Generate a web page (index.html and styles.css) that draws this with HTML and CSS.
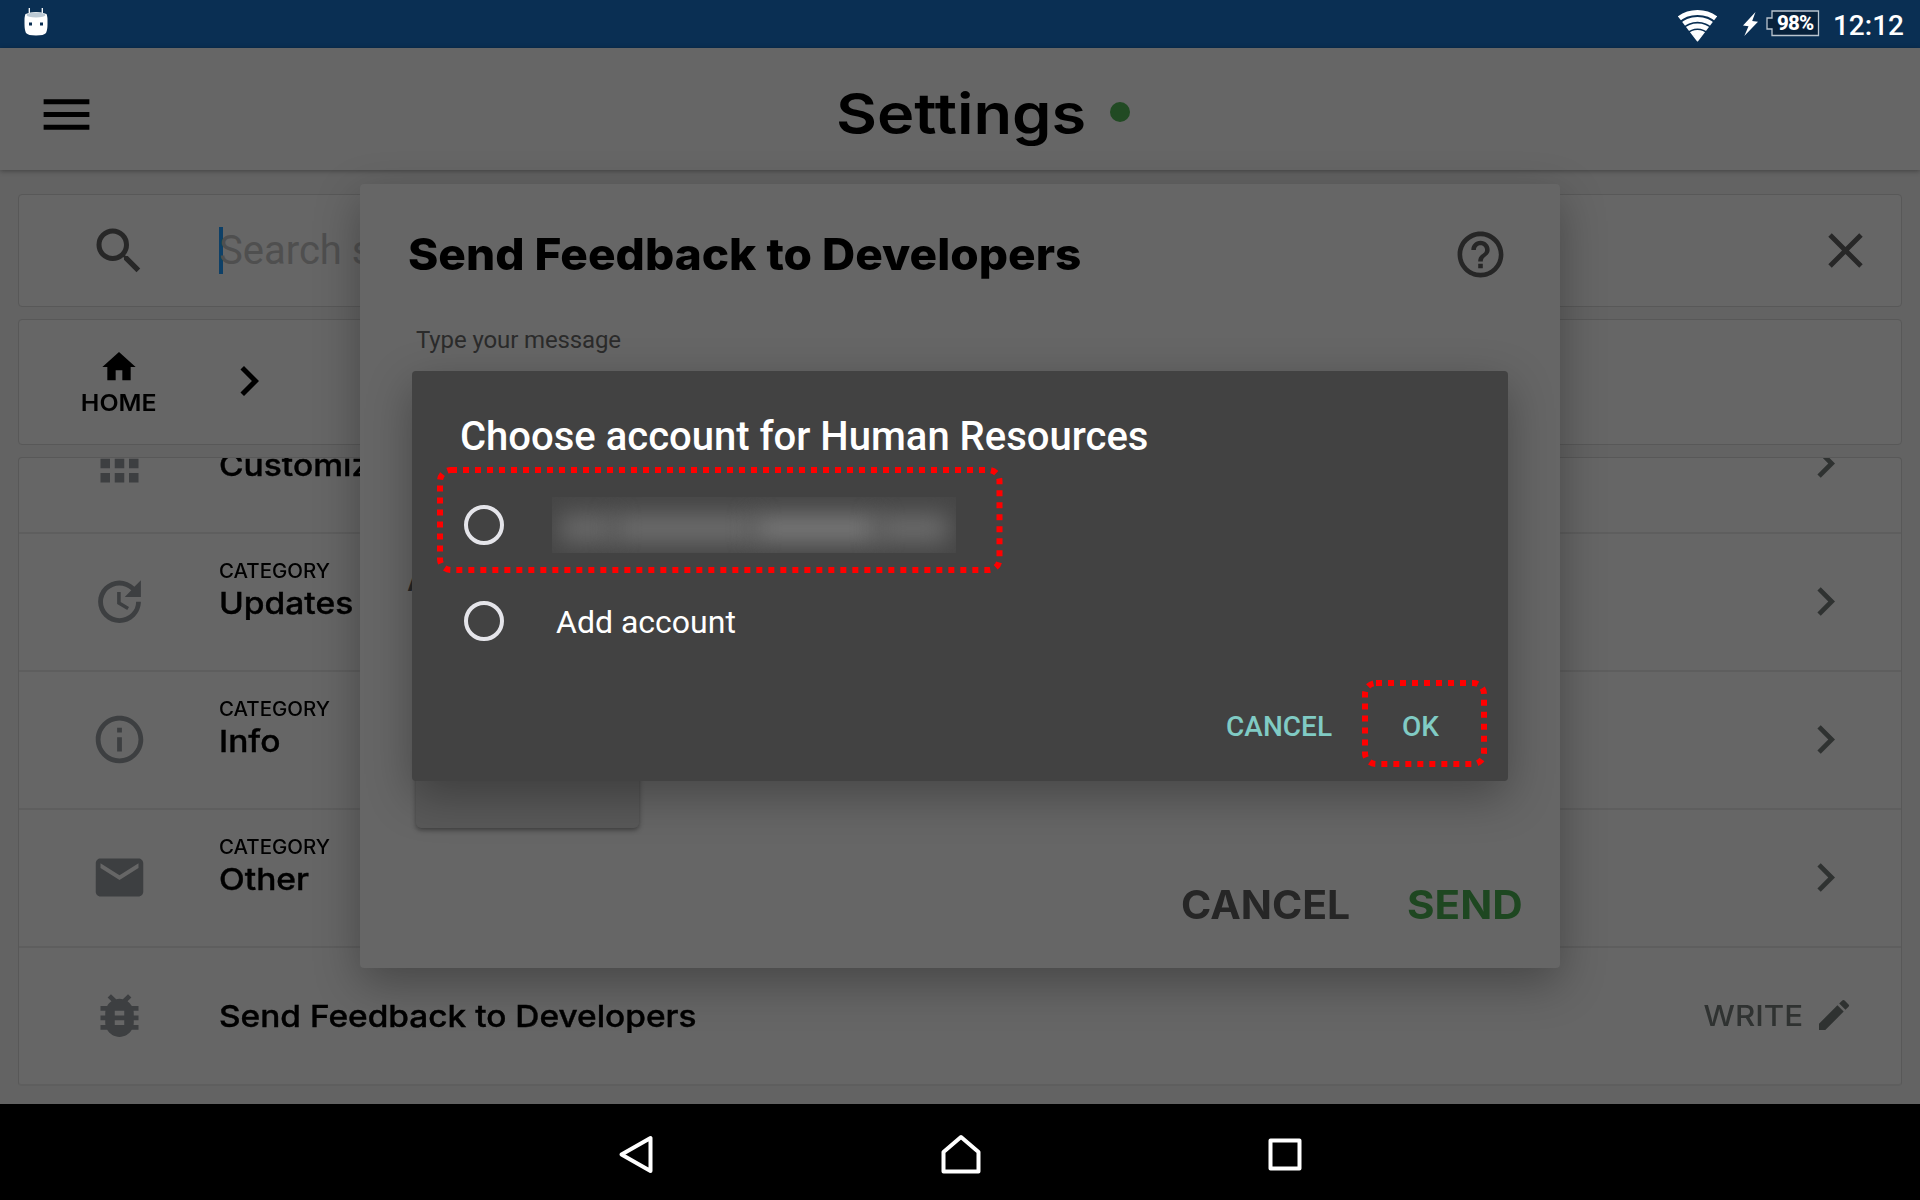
FILE: index.html
```html
<!DOCTYPE html>
<html lang="en">
<head>
<meta charset="utf-8">
<title>Settings</title>
<link rel="stylesheet" href="styles.css">
</head>
<body>
<svg class="defs" width="0" height="0">
  <symbol id="chevron" viewBox="0 0 24 24"><path d="M8.59 16.59 13.17 12 8.59 7.41 10 6l6 6-6 6z"/></symbol>
</svg>
<div class="screen">
  <header class="status">
    <svg class="droid" viewBox="0 0 24 28"><path d="M5.300 0v6M18.300 0v6" stroke="#fff" stroke-width="1.300"/><path fill="#fff" d="M1.500 6Q12 2 22.500 6 23.700 8 23.500 16q0 6-1.500 9-2 2.500-10 2.500T2 25Q.5 22 .5 16 .3 8 1.500 6z"/><ellipse cx="12" cy="7" rx="9.500" ry="2.600" fill="#bccad5"/><path fill="#0a2f53" d="M5 14.500h3v3H5zM16 14.500h3v3h-3z"/></svg>
    <svg class="wifi" viewBox="0 0 39 32" fill="none"><defs><clipPath id="fan"><path d="M19.500 32 0 6.500V0h39v6.500z"/></clipPath></defs><g clip-path="url(#fan)" stroke="#fff" stroke-width="4.800"><circle cx="19.500" cy="34" r="31.500"/><circle cx="19.500" cy="34" r="24.600"/><circle cx="19.500" cy="34" r="18"/><circle cx="19.500" cy="34" r="11.500"/><circle cx="19.500" cy="32" r="3.500" stroke-width="8"/></g></svg>
    <svg class="bolt" viewBox="0 0 15 24"><path fill="#fff" d="M12.500 0 0 13.500l5.500.8L1.300 24 15 9.800l-5.800-.8z"/></svg>
    <div class="battery"><svg viewBox="0 0 54 27"><path d="M6 1h46.500v24.500H6V19H1V8h5z" fill="#07213b" stroke="#b9c4ce" stroke-width="1.300"/></svg><span>98%</span></div>
    <time class="clock">12:12</time>
  </header>

  <div class="appbar">
    <svg class="menu" viewBox="0 0 24 24"><path d="M3 18h18v-2H3v2zm0-5h18v-2H3v2zm0-7v2h18V6H3z"/></svg>
    <h1><span class="fit">Settings</span></h1>
    <i class="dot"></i>
  </div>

  <main class="content">
    <section class="card search">
      <svg class="ic60" viewBox="0 0 24 24"><path d="M15.500 14h-.79l-.28-.27A6.471 6.471 0 0 0 16 9.500 6.500 6.500 0 1 0 9.500 16c1.610 0 3.090-.59 4.230-1.570l.27.28v.79l5 4.990L20.490 19l-4.990-5zm-6 0C7.010 14 5 11.990 5 9.500S7.010 5 9.500 5 14 7.010 14 9.500 11.990 14 9.500 14z"/></svg>
      <div class="field">Search settings</div>
      <svg class="ic59" viewBox="0 0 24 24"><path d="M19 6.410 17.590 5 12 10.590 6.410 5 5 6.410 10.590 12 5 17.590 6.410 19 12 13.410 17.590 19 19 17.590 13.410 12z"/></svg>
    </section>

    <nav class="card crumbs">
      <div class="home">
        <svg class="ic40" viewBox="0 0 24 24"><path d="M10 20v-6h4v6h5v-8h3L12 3 2 12h3v8z"/></svg>
        <span class="fit">HOME</span>
      </div>
      <svg class="ic60"><use href="#chevron"/></svg>
    </nav>

    <section class="card list">
      <div class="row">
        <svg class="ic57" viewBox="0 0 24 24"><path d="M4 8h4V4H4v4zm6 12h4v-4h-4v4zm-6 0h4v-4H4v4zm0-6h4v-4H4v4zm6 0h4v-4h-4v4zm6-10v4h4V4h-4zm-6 4h4V4h-4v4zm6 6h4v-4h-4v4zm0 6h4v-4h-4v4z"/></svg>
        <div class="label"><b><span class="fit">Customize</span></b></div>
        <svg class="ic57 go"><use href="#chevron"/></svg>
      </div>
      <div class="row">
        <svg class="ic57" viewBox="0 0 24 24"><path d="M21 10.120h-6.780l2.740-2.820c-2.730-2.700-7.150-2.800-9.880-.1a6.875 6.875 0 0 0 0 9.790 7.020 7.020 0 0 0 9.880 0C18.320 15.650 19 14.080 19 12.100h2c0 1.980-.88 4.550-2.640 6.290-3.510 3.480-9.210 3.480-12.720 0-3.500-3.470-3.530-9.110-.02-12.580a8.987 8.987 0 0 1 12.650 0L21 3v7.120zM12.500 8v4.250l3.500 2.080-.72 1.210L11 13V8h1.500z"/></svg>
        <div class="label"><small><span class="fit">CATEGORY</span></small><b><span class="fit">Updates</span></b></div>
        <svg class="ic57 go"><use href="#chevron"/></svg>
      </div>
      <div class="row">
        <svg class="ic57" viewBox="0 0 24 24"><path d="M11 17h2v-6h-2v6zm1-15C6.480 2 2 6.480 2 12s4.480 10 10 10 10-4.480 10-10S17.520 2 12 2zm0 18c-4.410 0-8-3.590-8-8s3.590-8 8-8 8 3.590 8 8-3.590 8-8 8zM11 9h2V7h-2v2z"/></svg>
        <div class="label"><small><span class="fit">CATEGORY</span></small><b><span class="fit">Info</span></b></div>
        <svg class="ic57 go"><use href="#chevron"/></svg>
      </div>
      <div class="row">
        <svg class="ic57" viewBox="0 0 24 24"><path d="M20 4H4c-1.100 0-1.990.9-1.990 2L2 18c0 1.100.9 2 2 2h16c1.100 0 2-.9 2-2V6c0-1.100-.9-2-2-2zm0 4-8 5-8-5V6l8 5 8-5v2z"/></svg>
        <div class="label"><small><span class="fit">CATEGORY</span></small><b><span class="fit">Other</span></b></div>
        <svg class="ic57 go"><use href="#chevron"/></svg>
      </div>
      <div class="row">
        <svg class="ic57" viewBox="0 0 24 24"><path d="M20 8h-2.810a5.985 5.985 0 0 0-1.820-1.960L17 4.410 15.590 3l-2.170 2.170a6.002 6.002 0 0 0-2.830 0L8.410 3 7 4.410l1.620 1.630C7.880 6.550 7.260 7.220 6.810 8H4v2h2.090c-.05.33-.09.66-.09 1v1H4v2h2v1c0 .34.040.67.090 1H4v2h2.810c1.040 1.790 2.970 3 5.190 3s4.150-1.210 5.190-3H20v-2h-2.090c.05-.33.090-.66.090-1v-1h2v-2h-2v-1c0-.34-.040-.67-.090-1H20V8zm-6 8h-4v-2h4v2zm0-4h-4v-2h4v2z"/></svg>
        <div class="label single"><b><span class="fit">Send Feedback to Developers</span></b></div>
        <div class="write"><span class="fit">WRITE</span><svg class="ic40" viewBox="0 0 24 24"><path d="M3 17.250V21h3.750L17.810 9.940l-3.750-3.750L3 17.250zM20.710 7.040a.996.996 0 0 0 0-1.410l-2.340-2.340a.996.996 0 0 0-1.410 0l-1.830 1.830 3.750 3.750 1.830-1.830z"/></svg></div>
      </div>
    </section>
  </main>

  <footer class="navbar">
    <svg viewBox="0 0 40 40"><path d="M4.500 20.500 33.500 4v33z"/></svg>
    <svg viewBox="0 0 40 40"><path d="M2.500 37.500V18L20 3l17.500 15v19.500z"/></svg>
    <svg viewBox="0 0 40 40"><path d="M5.500 6.500h29v28h-29z"/></svg>
  </footer>

  <section class="feedback">
    <div class="feedback-head">
      <h2><span class="fit">Send Feedback to Developers</span></h2>
      <svg class="ic55" viewBox="0 0 24 24"><path d="M11 18h2v-2h-2v2zm1-16C6.480 2 2 6.480 2 12s4.480 10 10 10 10-4.480 10-10S17.520 2 12 2zm0 18c-4.410 0-8-3.590-8-8s3.590-8 8-8 8 3.590 8 8-3.590 8-8 8zm0-14c-2.210 0-4 1.790-4 4h2c0-1.100.9-2 2-2s2 .9 2 2c0 2-3 1.750-3 5h2c0-2.250 3-2.500 3-5 0-2.210-1.790-4-4-4z"/></svg>
    </div>
    <div class="hint">Type your message</div>
    <div class="attach">A</div>
    <div class="attach-btn"></div>
    <div class="feedback-actions"><span class="cancel"><span class="fit">CANCEL</span></span><span class="send"><span class="fit">SEND</span></span></div>
  </section>

  <section class="chooser">
    <h3>Choose account for Human Resources</h3>
    <div class="option"><i class="radio"></i><div class="redacted"><i></i><i></i><i></i><i></i></div></div>
    <div class="option"><i class="radio"></i><span>Add account</span></div>
    <div class="chooser-actions"><span>CANCEL</span><span>OK</span></div>
    <svg class="mark mark-account" width="568" height="108"><rect x="4" y="4" width="559.500" height="100" rx="11"/></svg>
    <svg class="mark mark-ok" width="127" height="89"><rect x="4" y="4" width="119" height="81" rx="11"/></svg>
  </section>
</div>
</body>
</html>
```
FILE: styles.css
```css
* { box-sizing: border-box; margin: 0; padding: 0; }
body { width: 1920px; height: 1200px; overflow: hidden; background: #000; font-family: Roboto, sans-serif; }
.defs { position: absolute; }
svg { display: block; flex: none; }
.screen { position: relative; width: 1920px; height: 1200px; overflow: hidden; display: grid; grid-template-rows: 48px 122px 934px 96px; }
.fit { display: inline-block; white-space: nowrap; font-family: Inter, sans-serif; transform: scaleX(1.1); transform-origin: 0 50%; }

.status { background: #0a2f53; color: #fff; display: flex; align-items: flex-start; padding: 0 16px 0 24px; }
.droid { width: 24px; height: 28px; margin-top: 8px; }
.wifi { width: 39px; height: 32px; margin: 10px 26px 0 auto; }
.bolt { width: 15px; height: 24px; margin: 12px 8px 0 0; }
.battery { position: relative; width: 54px; height: 27px; margin-top: 10px; padding-left: 11px; font-size: 20.500px; font-weight: 800; line-height: 27px; letter-spacing: -0.8px; }
.battery svg { position: absolute; inset: 0; }
.battery span { position: relative; }
.clock { margin-left: 13px; font-size: 28px; font-weight: 500; line-height: 51px; }

.appbar { position: relative; z-index: 1; background: #666; display: grid; grid-template-columns: 801px 281px 20px; align-items: center; padding: 10px 0 0 35.500px; box-shadow: 0 1px 5px rgba(0,0,0,.35); }
.menu { width: 61px; height: 61px; }
h1 { font-size: 56px; font-weight: 600; line-height: 70px; margin-left: -1px; }
h1 .fit { transform: scaleX(1.127); }
.dot { width: 20px; height: 20px; margin: 0 0 5px -8px; border-radius: 50%; background: #214a23; }

.content { background: #636363; padding: 24px 18px 18px; display: grid; grid-template-rows: 113px 126px 629px; row-gap: 12px; }
.card { border: 1px solid #585858; border-radius: 4px; background: #666; }
.ic40 { width: 40px; height: 40px; }
.ic55 { width: 55px; height: 55px; }
.ic57 { width: 57px; height: 57px; }
.ic59 { width: 59px; height: 59px; }
.ic60 { width: 60px; height: 60px; }
.search, .crumbs { display: grid; grid-template-columns: 200px 1fr auto; align-items: center; }
.search { fill: #272727; padding-right: 26.500px; }
.search .ic60 { justify-self: center; }
.field { border-left: 4px solid #0e4067; height: 47px; font-size: 40px; line-height: 48px; color: #4f4f4f; text-indent: -4px; }
.crumbs > .ic60 { margin-bottom: 2px; }
.home { display: flex; flex-direction: column; align-items: center; padding-top: 2px; font-size: 23.500px; font-weight: 600; line-height: 32px; }
.home .fit { transform: scaleX(1.06); transform-origin: 50% 50%; }

.list { overflow: hidden; display: flex; flex-direction: column; justify-content: flex-end; border-bottom-width: 2px; border-bottom-color: #5e5e5e; }
.row { flex: none; height: 138px; display: grid; grid-template-columns: 200px 1fr auto; align-items: center; padding: 0 47px 2px 0; border-top: 2px solid #5e5e5e; fill: #3d3f41; }
.row > .ic57:first-child { justify-self: center; }
.row .go { fill: #2f3231; }
.label { align-self: stretch; display: flex; flex-direction: column; justify-content: flex-end; padding-bottom: 47px; }
.label small { font-size: 19.500px; font-weight: 500; line-height: 28px; }
.label small .fit { transform: scaleX(1.05); }
.label b { font-size: 30.500px; font-weight: 500; line-height: 34px; -webkit-text-stroke: .4px #000; }
.label.single { padding-bottom: 48px; }
.label.single .fit { transform: scaleX(1.096); }
.write { display: flex; align-items: center; gap: 11px; font-size: 29px; font-weight: 500; color: #2f3231; fill: #2f3231; }
.write .fit { transform: scaleX(1.08); transform-origin: 100% 50%; }

.navbar { background: #000; display: flex; justify-content: center; align-items: center; gap: 284px; padding: 4px 0 0 1px; }
.navbar svg { width: 40px; height: 40px; fill: none; stroke: #fff; stroke-width: 4; stroke-linejoin: round; }

.feedback { position: absolute; z-index: 2; left: 360px; top: 184px; width: 1200px; height: 784px; border-radius: 4px; background: #666; box-shadow: 0 15px 46px rgba(0,0,0,.31); display: flex; flex-direction: column; }
.feedback-head { display: flex; justify-content: space-between; align-items: center; height: 100px; padding: 40px 52.500px 0 48px; }
h2 { font-size: 44px; font-weight: 800; line-height: 60px; }
h2 .fit { transform: scaleX(1.045); }
.feedback-head svg { fill: #262626; }
.hint { margin: 40px 0 0 56px; font-size: 24px; line-height: 32px; letter-spacing: -0.12px; color: #2b2b2b; }
.attach { margin: 204px 0 0 47px; font: 500 32px/40px Inter, sans-serif; color: #262626; }
.attach-btn { width: 223px; height: 84px; margin: 144px 0 0 56px; border-radius: 5px; background: #595959; box-shadow: 0 2px 5px rgba(0,0,0,.4); }
.feedback-actions { display: flex; margin: 42px 0 0 820.500px; font-size: 39px; font-weight: 700; line-height: 69px; }
.feedback-actions .cancel { width: 226px; color: #262626; }
.feedback-actions .cancel .fit { transform: scaleX(1.05); }
.feedback-actions .send { color: #1e4721; }
.feedback-actions .send .fit { transform: scaleX(1.08); }

.chooser { position: absolute; z-index: 3; left: 412px; top: 371px; width: 1096px; height: 410px; border-radius: 4px; background: #424242; color: #fff; box-shadow: 0 15px 46px rgba(0,0,0,.31); padding: 41px 48px 0; }
h3 { font-size: 40px; font-weight: 500; line-height: 50px; }
.option { height: 96px; display: flex; align-items: center; padding: 0 0 0 4px; font-size: 32px; }
.option:nth-of-type(1) { margin-top: 15px; }
.radio { width: 40px; height: 40px; border: 4px solid #e5e5ea; border-radius: 50%; }
.option span { margin: 2px 0 0 52px; }
.redacted { display: flex; align-items: center; width: 404px; height: 56px; margin-left: 48px; padding: 7px 8px 0; overflow: hidden; background: #464646; }
.redacted i { height: 27px; filter: blur(12px); }
.redacted i:nth-child(1) { width: 54px; background: #6c6c6c; }
.redacted i:nth-child(2) { width: 140px; background: #707070; }
.redacted i:nth-child(3) { width: 124px; background: #7c7c7c; }
.redacted i:nth-child(4) { width: 70px; background: #6e6e6e; }
.chooser-actions { display: flex; justify-content: flex-end; gap: 70px; margin-top: 36px; padding-right: 21px; font-size: 28px; font-weight: 500; line-height: 44px; color: #80cbc4; }
.mark { position: absolute; fill: none; stroke: #f00; stroke-width: 6; stroke-dasharray: 6 6; }
.mark-account { left: 24px; top: 95px; }
.mark-ok { left: 949px; top: 308px; }
```
